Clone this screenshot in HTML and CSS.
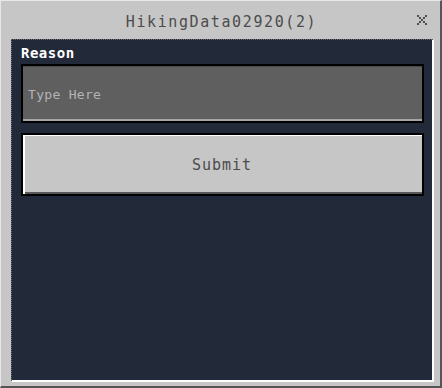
FILE: index.html
```html
<!DOCTYPE html>
<html>
<head>
<meta charset="utf-8">
<link rel="stylesheet" href="styles.css">
</head>
<body>
<div class="window">
  <div class="titlebar">
    <span class="title">HikingData02920(2)</span>
    <span class="close" aria-label="close">
      <svg width="10" height="10" viewBox="0 0 10 10" shape-rendering="crispEdges">
        <g fill="#4f4f4f">
          <rect x="0" y="0" width="2" height="2"/><rect x="8" y="0" width="2" height="2"/>
          <rect x="2" y="2" width="2" height="2"/><rect x="6" y="2" width="2" height="2"/>
          <rect x="4" y="4" width="2" height="2"/>
          <rect x="2" y="6" width="2" height="2"/><rect x="6" y="6" width="2" height="2"/>
          <rect x="0" y="8" width="2" height="2"/><rect x="8" y="8" width="2" height="2"/>
        </g>
      </svg>
    </span>
  </div>
  <div class="panel">
    <div class="label">Reason</div>
    <div class="input"><span class="placeholder">Type Here</span></div>
    <div class="button"><span>Submit</span></div>
  </div>
</div>
</body>
</html>
```
FILE: styles.css
```css
html, body {
  margin: 0;
  padding: 0;
  background: #c6c6c6;
}
.window {
  box-sizing: border-box;
  width: 442px;
  height: 388px;
  background: #c6c6c6;
  border-top: 1px solid #e8e8e8;
  border-left: 1px solid #e8e8e8;
  border-right: 2px solid #555555;
  border-bottom: 2px solid #555555;
  display: flex;
  flex-direction: column;
}
.titlebar {
  height: 38px;
  position: relative;
  display: flex;
  align-items: center;
  justify-content: center;
}
.title {
  font-family: "DejaVu Sans Mono", monospace;
  font-size: 15px;
  letter-spacing: 1.6px;
  color: #4c4c4c;
  margin-top: 4px;
  margin-left: 2px;
}
.close {
  position: absolute;
  left: 416px;
  top: 14px;
  width: 10px;
  height: 10px;
  display: block;
}
.close svg { display: block; }
.panel {
  flex: 1;
  margin: 0 6px 4px 10px;
  background: #222a39;
  border-left: 1px dotted #6a6a6a;
  border-top: 1px dotted #6a6a6a;
  border-right: 2px solid #ffffff;
  border-bottom: 2px solid #ffffff;
  padding: 3px 8px 0 9px;
  display: flex;
  flex-direction: column;
}
.label {
  font-family: "DejaVu Sans Mono", monospace;
  font-weight: bold;
  font-size: 14px;
  letter-spacing: 0.5px;
  color: #ffffff;
  height: 21px;
  line-height: 20px;
}
.input {
  box-sizing: border-box;
  height: 59px;
  border: 2px solid #000000;
  background: #5f5f5f;
  box-shadow: inset 0 1px 0 #4a4a4a, inset 0 -2px 0 #a5a5a5;
  display: flex;
  align-items: center;
  padding-left: 5px;
}
.placeholder {
  font-family: "DejaVu Sans Mono", monospace;
  font-size: 13px;
  letter-spacing: 0.3px;
  color: #b4b4b4;
  margin-top: 2px;
}
.button {
  box-sizing: border-box;
  margin-top: 10px;
  height: 63px;
  border: 2px solid #000000;
  background: #c6c6c6;
  box-shadow: inset 2px 1px 0 #ffffff, inset 0 -2px 0 #585858;
  display: flex;
  align-items: center;
  justify-content: center;
}
.button span {
  font-family: "DejaVu Sans Mono", monospace;
  font-size: 15px;
  letter-spacing: 1px;
  color: #4c4c4c;
  margin-left: -1px;
}
```
